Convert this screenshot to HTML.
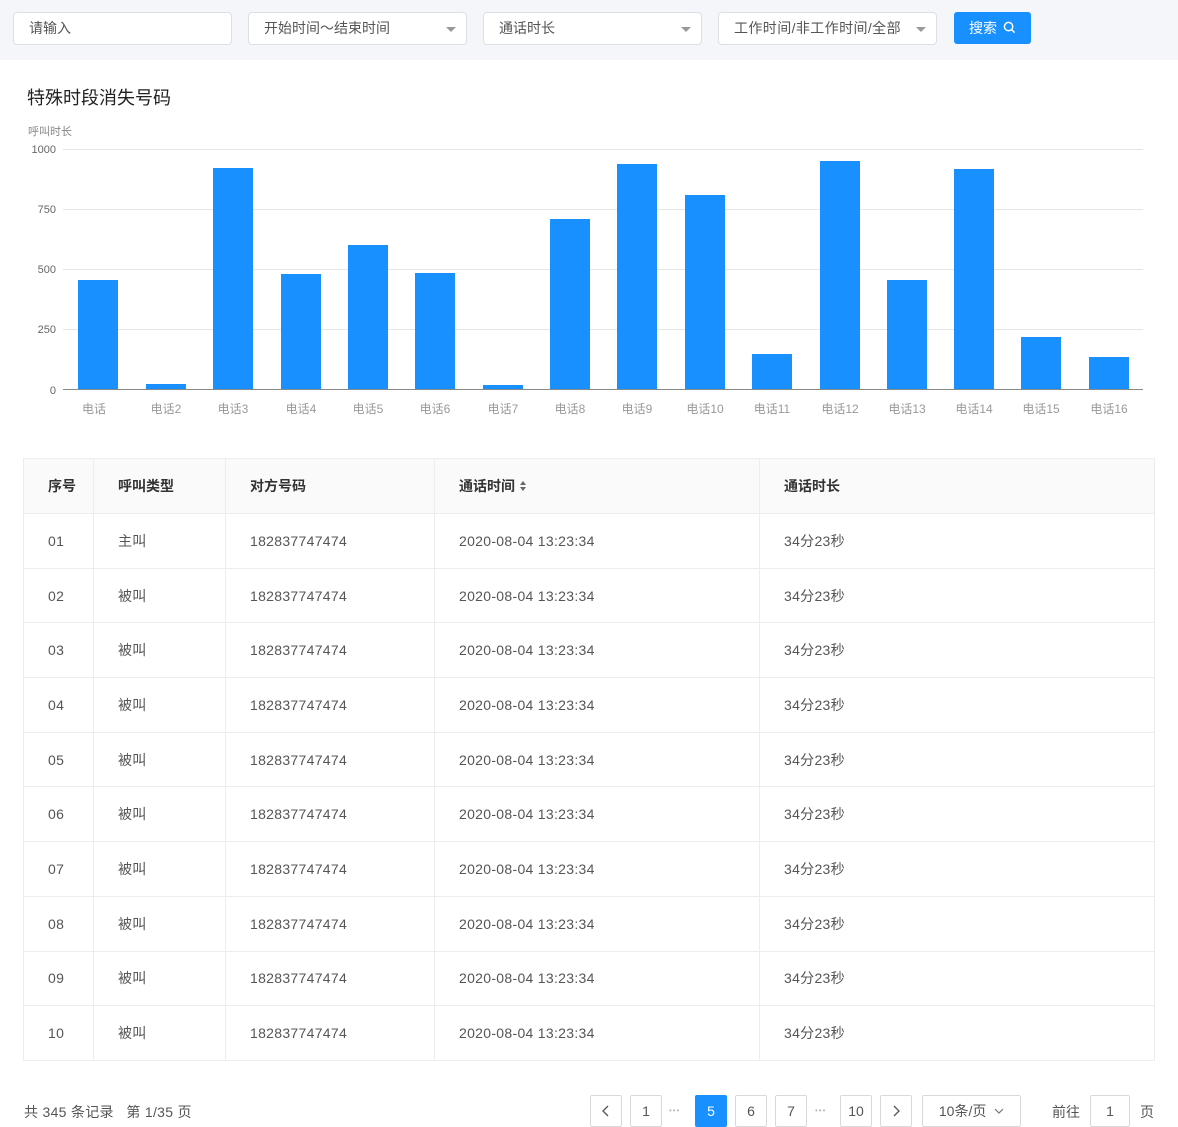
<!DOCTYPE html>
<html><head><meta charset="utf-8"><style>
*{box-sizing:border-box;margin:0;padding:0}
body{width:1178px;height:1127px;background:#fff;font-family:"Liberation Sans","Noto Sans CJK SC",sans-serif;position:relative;overflow:hidden;color:#333}
.a{position:absolute}
.top{left:0;top:0;width:1178px;height:60px;background:#f5f6fa}
.inp{top:12px;height:33px;border:1px solid #dcdfe6;border-radius:4px;background:#fff;font-size:14px;color:#555;padding:7px 15px;line-height:17px}
.tri{position:absolute;right:10px;top:14px;width:0;height:0;border-left:5px solid transparent;border-right:5px solid transparent;border-top:5px solid #999}
.btn{left:954px;top:12px;width:77px;height:32px;background:#1890ff;border-radius:3px;color:#fff;font-size:14px;line-height:32px;padding-left:15px}
.yl{font-size:11px;color:#666;text-align:right;width:36px;left:20px}
.gl{left:63px;width:1080px;height:1px;background:#e5e5e5}
.bar{background:#1890ff;width:40px}
.xl{font-size:12px;color:#999;width:60px;text-align:center;top:400px}
table{position:absolute;left:23px;top:458px;width:1132px;border-collapse:collapse;font-size:14px;color:#555;letter-spacing:0.3px}
td,th{border:1px solid #ededed;height:54.7px;padding-left:24px;text-align:left;font-weight:normal}
th{background:#fafafa;color:#333;font-weight:bold;height:55px;letter-spacing:0}
.pg{top:1095px;height:32px;border:1px solid #d9d9d9;border-radius:2px;font-size:14px;color:#555;text-align:center;line-height:30px;background:#fff}
.dots{top:1106px;font-size:8px;color:#bbb;line-height:10px;letter-spacing:1px}
</style></head><body>
<div class="a top"></div>
<div class="a inp" style="left:13px;width:219px;">请输入</div>
<div class="a inp" style="left:248px;width:219px;">开始时间～结束时间<span class="tri"></span></div>
<div class="a inp" style="left:483px;width:219px;">通话时长<span class="tri"></span></div>
<div class="a inp" style="left:718px;width:219px;letter-spacing:0.4px">工作时间/非工作时间/全部<span class="tri"></span></div>
<div class="a btn">搜索 <svg width="13" height="13" viewBox="0 0 14 14" style="vertical-align:-1px;margin-left:2px"><circle cx="6" cy="6" r="4.5" fill="none" stroke="#fff" stroke-width="1.6"/><path d="M9.3 9.3L12.5 12.5" stroke="#fff" stroke-width="1.6"/></svg></div>

<div class="a" style="left:27px;top:84px;font-size:18px;color:#222">特殊时段消失号码</div>
<div class="a" style="left:28px;top:123px;font-size:11px;color:#888">呼叫时长</div>
<div class="a yl" style="top:144px">1000</div>
<div class="a yl" style="top:204px">750</div>
<div class="a yl" style="top:264px">500</div>
<div class="a yl" style="top:324px">250</div>
<div class="a yl" style="top:385px">0</div>
<div class="a gl" style="top:149px"></div>
<div class="a gl" style="top:209px"></div>
<div class="a gl" style="top:269px"></div>
<div class="a gl" style="top:329px"></div>
<div class="a bar" style="left:78px;top:280px;height:109px"></div>
<div class="a bar" style="left:146px;top:384px;height:5px"></div>
<div class="a bar" style="left:213px;top:168px;height:221px"></div>
<div class="a bar" style="left:281px;top:274px;height:115px"></div>
<div class="a bar" style="left:348px;top:245px;height:144px"></div>
<div class="a bar" style="left:415px;top:273px;height:116px"></div>
<div class="a bar" style="left:483px;top:385px;height:4px"></div>
<div class="a bar" style="left:550px;top:219px;height:170px"></div>
<div class="a bar" style="left:617px;top:164px;height:225px"></div>
<div class="a bar" style="left:685px;top:195px;height:194px"></div>
<div class="a bar" style="left:752px;top:354px;height:35px"></div>
<div class="a bar" style="left:820px;top:161px;height:228px"></div>
<div class="a bar" style="left:887px;top:280px;height:109px"></div>
<div class="a bar" style="left:954px;top:169px;height:220px"></div>
<div class="a bar" style="left:1021px;top:337px;height:52px"></div>
<div class="a bar" style="left:1089px;top:357px;height:32px"></div>
<div class="a" style="left:63px;top:389px;width:1080px;height:1px;background:#888"></div>
<div class="a xl" style="left:64px">电话</div>
<div class="a xl" style="left:136px">电话2</div>
<div class="a xl" style="left:203px">电话3</div>
<div class="a xl" style="left:271px">电话4</div>
<div class="a xl" style="left:338px">电话5</div>
<div class="a xl" style="left:405px">电话6</div>
<div class="a xl" style="left:473px">电话7</div>
<div class="a xl" style="left:540px">电话8</div>
<div class="a xl" style="left:607px">电话9</div>
<div class="a xl" style="left:675px">电话10</div>
<div class="a xl" style="left:742px">电话11</div>
<div class="a xl" style="left:810px">电话12</div>
<div class="a xl" style="left:877px">电话13</div>
<div class="a xl" style="left:944px">电话14</div>
<div class="a xl" style="left:1011px">电话15</div>
<div class="a xl" style="left:1079px">电话16</div>

<table>
<colgroup><col style="width:70px"><col style="width:132px"><col style="width:209px"><col style="width:325px"><col></colgroup>
<tr><th>序号</th><th>呼叫类型</th><th>对方号码</th><th>通话时间 <svg width="8" height="12" viewBox="0 0 8 12" style="vertical-align:-1px"><path d="M4 1L7 5H1Z M4 11L7 7H1Z" fill="#666"/></svg></th><th>通话时长</th></tr>
<tr><td>01</td><td>主叫</td><td>182837747474</td><td>2020-08-04 13:23:34</td><td>34分23秒</td></tr>
<tr><td>02</td><td>被叫</td><td>182837747474</td><td>2020-08-04 13:23:34</td><td>34分23秒</td></tr>
<tr><td>03</td><td>被叫</td><td>182837747474</td><td>2020-08-04 13:23:34</td><td>34分23秒</td></tr>
<tr><td>04</td><td>被叫</td><td>182837747474</td><td>2020-08-04 13:23:34</td><td>34分23秒</td></tr>
<tr><td>05</td><td>被叫</td><td>182837747474</td><td>2020-08-04 13:23:34</td><td>34分23秒</td></tr>
<tr><td>06</td><td>被叫</td><td>182837747474</td><td>2020-08-04 13:23:34</td><td>34分23秒</td></tr>
<tr><td>07</td><td>被叫</td><td>182837747474</td><td>2020-08-04 13:23:34</td><td>34分23秒</td></tr>
<tr><td>08</td><td>被叫</td><td>182837747474</td><td>2020-08-04 13:23:34</td><td>34分23秒</td></tr>
<tr><td>09</td><td>被叫</td><td>182837747474</td><td>2020-08-04 13:23:34</td><td>34分23秒</td></tr>
<tr><td>10</td><td>被叫</td><td>182837747474</td><td>2020-08-04 13:23:34</td><td>34分23秒</td></tr>
</table>

<div class="a" style="left:24px;top:1102px;font-size:14px;color:#555;letter-spacing:0.3px">共 345 条记录&nbsp;&nbsp;&nbsp;第 1/35 页</div>
<div class="a pg" style="left:590px;width:32px"><svg width="10" height="12" viewBox="0 0 10 12" style="vertical-align:-1px"><path d="M7 1L2 6L7 11" fill="none" stroke="#555" stroke-width="1.3"/></svg></div>
<div class="a pg" style="left:630px;width:32px">1</div>
<div class="a dots" style="left:669px">•••</div>
<div class="a pg" style="left:695px;width:32px;background:#1890ff;border-color:#1890ff;color:#fff">5</div>
<div class="a pg" style="left:735px;width:32px">6</div>
<div class="a pg" style="left:775px;width:32px">7</div>
<div class="a dots" style="left:815px">•••</div>
<div class="a pg" style="left:840px;width:32px">10</div>
<div class="a pg" style="left:880px;width:32px"><svg width="10" height="12" viewBox="0 0 10 12" style="vertical-align:-1px"><path d="M3 1L8 6L3 11" fill="none" stroke="#555" stroke-width="1.3"/></svg></div>
<div class="a pg" style="left:922px;width:99px">10条/页 &nbsp;<svg width="10" height="8" viewBox="0 0 10 8" style="vertical-align:1px"><path d="M1 2L5 6L9 2" fill="none" stroke="#777" stroke-width="1.2"/></svg></div>
<div class="a" style="left:1052px;top:1102px;font-size:14px;color:#555">前往</div>
<div class="a pg" style="left:1090px;width:40px">1</div>
<div class="a" style="left:1140px;top:1102px;font-size:14px;color:#555">页</div>
</body></html>
